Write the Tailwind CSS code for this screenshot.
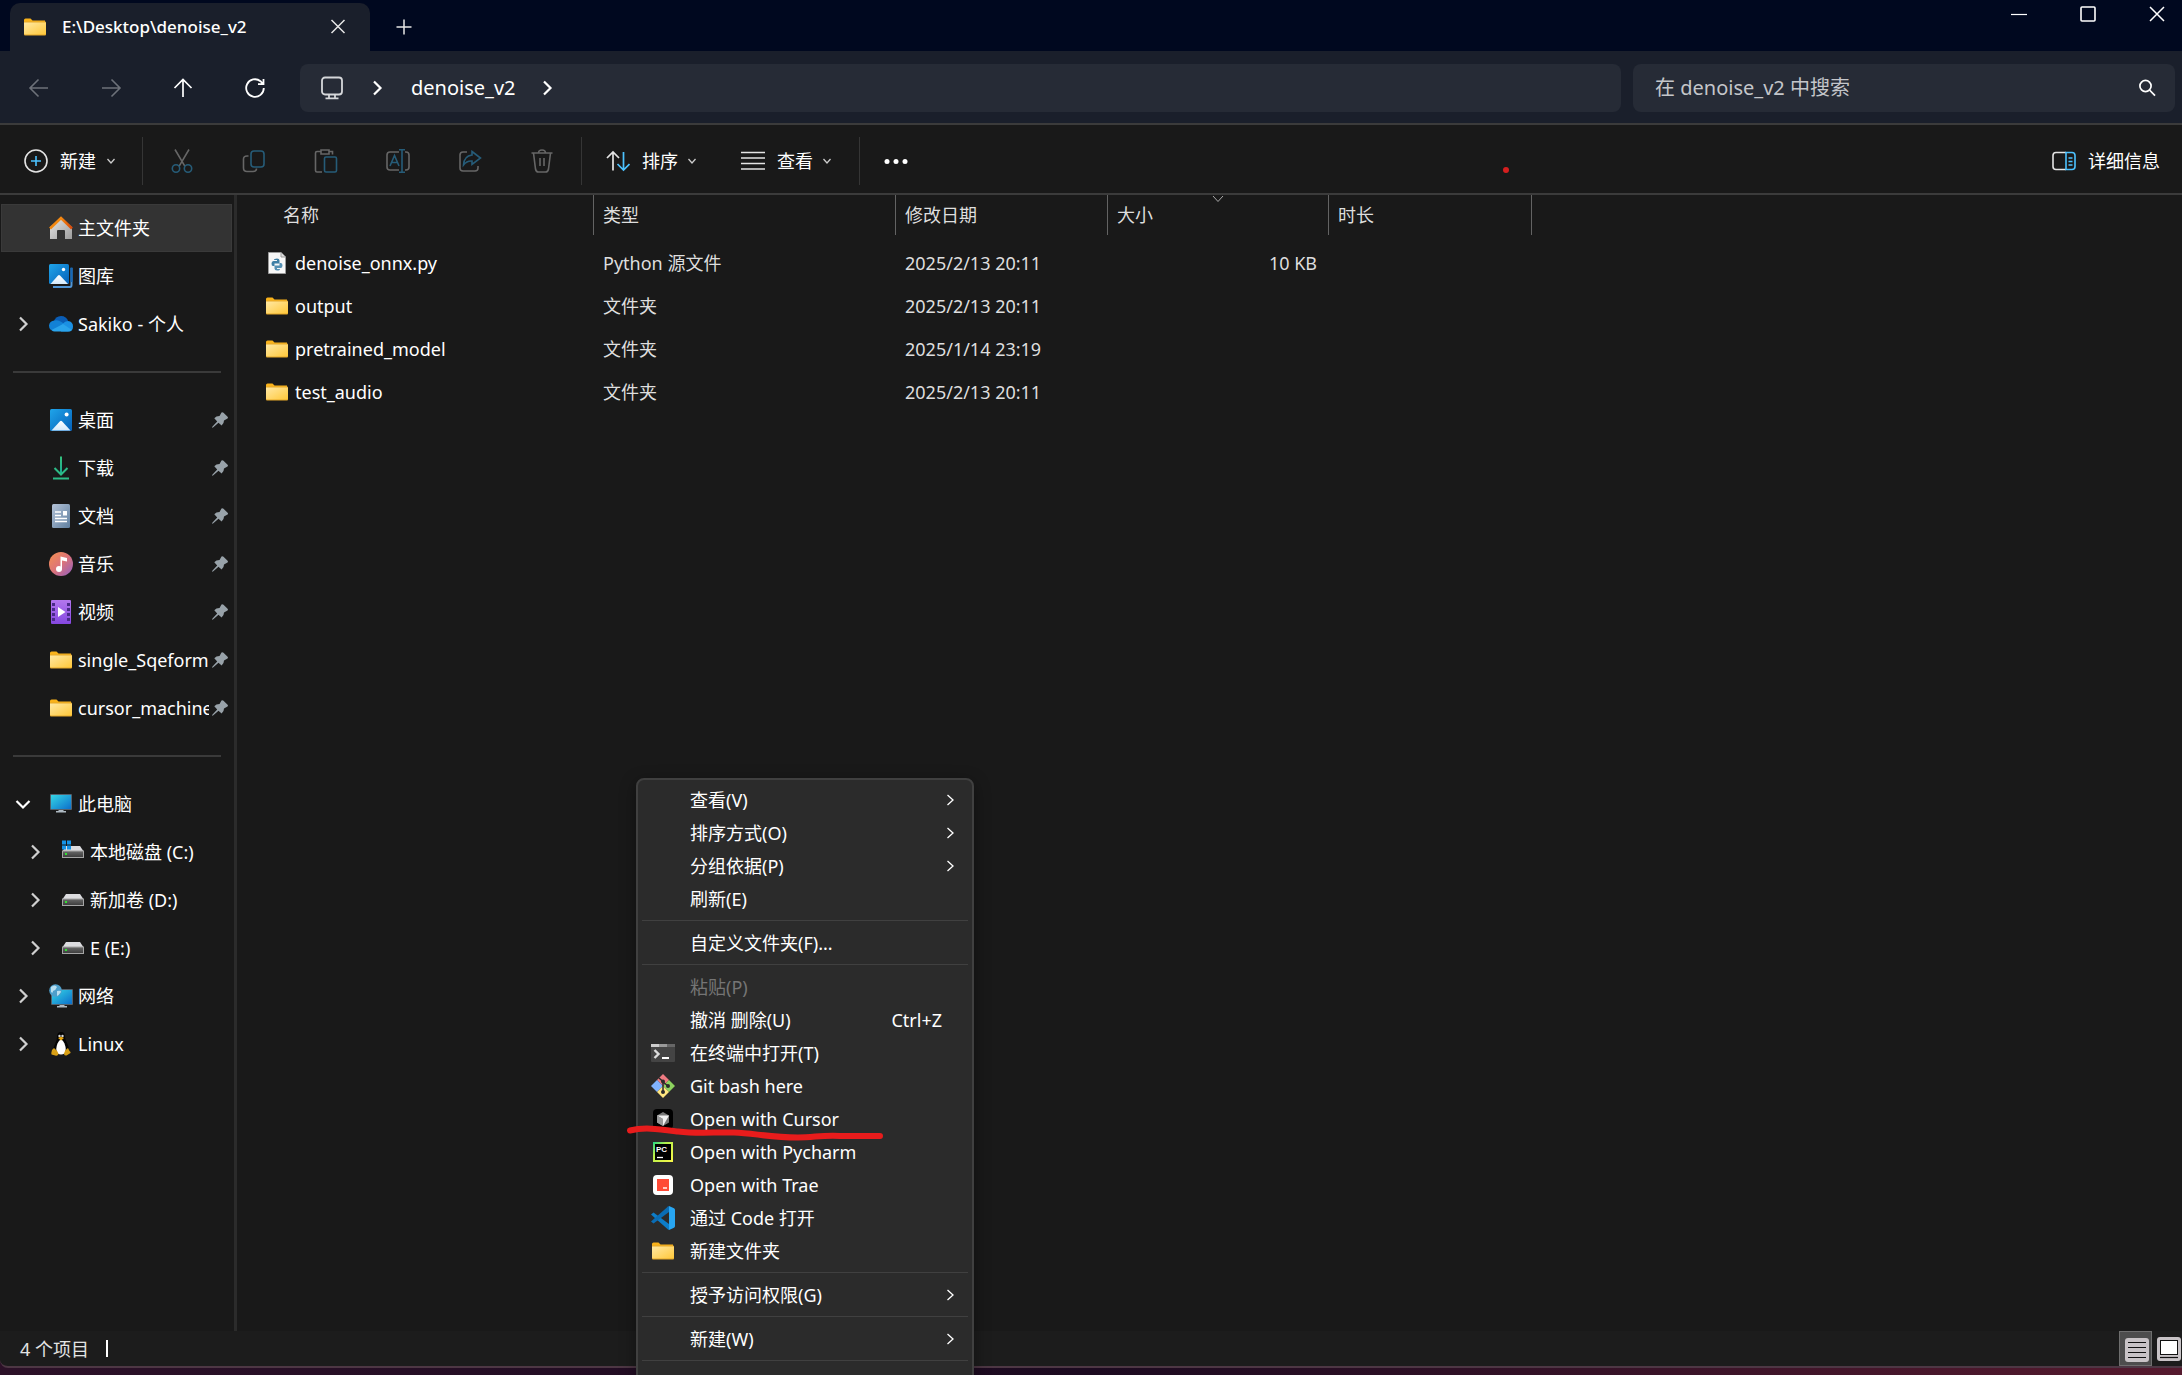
<!DOCTYPE html>
<html lang="zh-CN">
<head>
<meta charset="utf-8">
<meta name="viewport" content="width=device-width, initial-scale=1">
<title>E:\Desktop\denoise_v2</title>
<script src="https://cdn.jsdelivr.net/npm/@tailwindcss/browser@4"></script>
</head>
<body class="bg-[#191919]">
<svg class="absolute size-0" aria-hidden="true">
  <defs>
    <linearGradient id="gFolder" x1="0" y1="0" x2="1" y2="1"><stop offset="0" stop-color="#ffe8a3"/><stop offset="1" stop-color="#ffc83a"/></linearGradient>
    <linearGradient id="gBlue" x1="0" y1="0" x2="1" y2="1"><stop offset="0" stop-color="#1fa5ea"/><stop offset="1" stop-color="#0560b8"/></linearGradient>
    <linearGradient id="gScreen" x1="0" y1="0" x2="1" y2="1"><stop offset="0" stop-color="#35d6e6"/><stop offset="1" stop-color="#0c6fcb"/></linearGradient>
    <linearGradient id="gHouse" x1="0" y1="0" x2="1" y2="1"><stop offset="0" stop-color="#e6e6e6"/><stop offset="1" stop-color="#9d9d9d"/></linearGradient>
    <linearGradient id="gRoof" x1="0" y1="0" x2="1" y2="0"><stop offset="0" stop-color="#f0860f"/><stop offset=".5" stop-color="#f58a12"/><stop offset="1" stop-color="#d6470a"/></linearGradient>
    <linearGradient id="gSnow" x1="0" y1="0" x2="0" y2="1"><stop offset="0" stop-color="#fff"/><stop offset="1" stop-color="#d3e9fb"/></linearGradient>
    <linearGradient id="gDown" x1="0" y1="0" x2="0" y2="1"><stop offset="0" stop-color="#35c27d"/><stop offset="1" stop-color="#17a596"/></linearGradient>
    <linearGradient id="gDoc" x1="0" y1="0" x2="1" y2="1"><stop offset="0" stop-color="#b4c3d8"/><stop offset="1" stop-color="#5f7f9f"/></linearGradient>
    <linearGradient id="gMusic" x1="0" y1="0" x2="1" y2="1"><stop offset="0" stop-color="#f5914e"/><stop offset=".5" stop-color="#dc7379"/><stop offset="1" stop-color="#8f5fc4"/></linearGradient>
    <linearGradient id="gVideo" x1="0" y1="0" x2="0" y2="1"><stop offset="0" stop-color="#b377ee"/><stop offset="1" stop-color="#8547e0"/></linearGradient>
    <linearGradient id="gDisk" x1="0" y1="0" x2="0" y2="1"><stop offset="0" stop-color="#6a6a6a"/><stop offset="1" stop-color="#3a3a3a"/></linearGradient>
    <linearGradient id="gPc" x1="0" y1="0" x2="1" y2="1"><stop offset="0" stop-color="#21d789"/><stop offset=".35" stop-color="#b6f04a"/><stop offset="1" stop-color="#fcf84a"/></linearGradient>
    <symbol id="folder" viewBox="0 0 24 24"><path d="M1 5Q1 3.500 2.500 3.500H7.500L9.500 5.500H22V10H1Z" fill="#f9b21a"/><path d="M1 6.500H22Q23 6.500 23 7.500V19.500Q23 20.500 22 20.500H2Q1 20.500 1 19.500Z" fill="#e5a829"/><path d="M1 7.500H23V18.500Q23 19.500 22 19.500H2Q1 19.500 1 18.500Z" fill="url(#gFolder)"/></symbol>
    <symbol id="chev" viewBox="0 0 16 16"><path d="M5 1.500L11.500 8L5 14.500" fill="none" stroke="currentColor" stroke-width="2.200"/></symbol>
    <symbol id="chevthin" viewBox="0 0 12 12"><path d="M3.500 1L9 6L3.500 11" fill="none" stroke="currentColor" stroke-width="1.300"/></symbol>
    <symbol id="chevd" viewBox="0 0 10 10"><path d="M1.500 3L5 7L8.500 3" fill="none" stroke="currentColor" stroke-width="1.300"/></symbol>
    <symbol id="pin" viewBox="0 0 18 18"><path d="M10.500 1.500Q11.500.800 12.500 1.700L16.600 5.800Q17.500 6.800 16.500 7.600L13 9.500Q13 13 10.600 14.400L7.500 11.700L2 16.500L1 16.800L1.300 15.700L6.200 10.400L3.300 7.200Q5 5 8.500 5Z" fill="#98a2a9"/></symbol>
    <symbol id="picture" viewBox="0 0 24 24"><rect x="1" y="1" width="22" height="22" rx="1.500" fill="url(#gBlue)"/><path d="M2.500 22.500L11 13.200Q12 12.200 13 13.200L21.500 22.500Z" fill="url(#gSnow)"/><circle cx="17.600" cy="6.400" r="2" fill="#fff"/></symbol>
    <symbol id="disk" viewBox="0 0 24 24"><path d="M5 6H19L23 12H1Z" fill="#dcdcdf"/><rect x="1.500" y="11" width="21" height="6.500" fill="url(#gDisk)" stroke="#a5a5a5"/><rect x="4" y="13" width="2" height="2" fill="#31e231"/></symbol>
  </defs>
</svg>

<div class="relative flex h-screen flex-col overflow-hidden bg-[#191919] font-['Noto_Sans','Noto_Sans_CJK_SC',sans-serif] text-[18px] leading-6 text-white">

  <!-- Title bar with tabs -->
  <header class="flex h-[51px] shrink-0 justify-between bg-[#00081f]">
    <div class="flex items-end pl-[10px]">
      <div class="flex h-12 w-[360px] items-center rounded-t-[10px] bg-[#1a1f2b] pl-[13px] pr-[19px]">
        <svg class="size-6"><use href="#folder"/></svg>
        <span class="ml-[15px] text-[17px] font-medium">E:\Desktop\denoise_v2</span>
        <button aria-label="关闭标签页" class="ml-auto"><svg class="size-[26px]" viewBox="0 0 26 26"><path d="M6.500 6L19.500 19M19.500 6L6.500 19" stroke="#e6e6e6" stroke-width="1.500"/></svg></button>
      </div>
      <button aria-label="新建标签页" class="ml-[22px] pb-3"><svg class="size-6" viewBox="0 0 24 24"><path d="M12 4.500V19.500M4.500 12H19.500" stroke="#e6e6e6" stroke-width="1.500"/></svg></button>
    </div>
    <div class="flex h-[27px] items-center gap-[47px] pr-[14px]">
      <button aria-label="最小化"><svg class="size-[22px]" viewBox="0 0 22 22"><path d="M3 11.500H19" stroke="#fff" stroke-width="1.200"/></svg></button>
      <button aria-label="最大化"><svg class="size-[22px]" viewBox="0 0 22 22"><rect x="4" y="4" width="14" height="14" rx="1" fill="none" stroke="#fff" stroke-width="1.600"/></svg></button>
      <button aria-label="关闭"><svg class="size-[22px]" viewBox="0 0 22 22"><path d="M4 4L18 18M18 4L4 18" stroke="#fff" stroke-width="1.500"/></svg></button>
    </div>
  </header>

  <!-- Navigation bar -->
  <nav class="flex h-[74px] shrink-0 items-center border-b-2 border-[#3b3b3b] bg-[#1a1f2b] pr-[7px] pt-[2px]">
    <div class="flex w-[300px] shrink-0 items-center gap-12 pl-[27px]">
      <button aria-label="后退"><svg class="size-6" viewBox="0 0 24 24" fill="none" stroke="#6d7179" stroke-width="1.600"><path d="M21 12H3.500M11.500 3.500L3 12L11.500 20.500"/></svg></button>
      <button aria-label="前进"><svg class="size-6" viewBox="0 0 24 24" fill="none" stroke="#6d7179" stroke-width="1.600"><path d="M3 12H20.500M12.500 3.500L21 12L12.500 20.500"/></svg></button>
      <button aria-label="上移"><svg class="size-6" viewBox="0 0 24 24" fill="none" stroke="#fff" stroke-width="1.700"><path d="M12 21V3.500M3.500 12L12 3.500L20.500 12"/></svg></button>
      <button aria-label="刷新"><svg class="size-6" viewBox="0 0 24 24" fill="none" stroke="#fff" stroke-width="1.800"><path d="M20.800 12A8.800 8.800 0 1 1 17.500 5.200L20 7.800M20.500 3V8.200H15"/></svg></button>
    </div>
    <div class="flex h-12 grow items-center rounded-lg bg-[#262b36] pl-5">
      <svg class="size-6" viewBox="0 0 24 24" fill="none" stroke="#d5d7da" stroke-width="1.800"><rect x="2" y="1.500" width="20" height="17" rx="3"/><path d="M9 18.500V22M15 18.500V22M5.500 22.300H18.500"/></svg>
      <svg class="ml-[25px] size-4 text-white"><use href="#chev"/></svg>
      <a href="#" class="ml-[26px] text-[20px]">denoise_v2</a>
      <svg class="ml-[23px] size-4 text-white"><use href="#chev"/></svg>
    </div>
    <div class="ml-3 flex h-12 w-[542px] shrink-0 items-center rounded-lg bg-[#262b36] pl-[22px] pr-[18px]">
      <input aria-label="搜索" placeholder="在 denoise_v2 中搜索" class="min-w-0 grow bg-transparent text-[20px] outline-none placeholder:text-[#c4c6ca]">
      <button aria-label="搜索"><svg class="size-5" viewBox="0 0 20 20" fill="none" stroke="#fff" stroke-width="1.700"><circle cx="8.500" cy="8" r="5.600"/><path d="M12.500 12L18 17.700"/></svg></button>
    </div>
  </nav>

  <!-- Command bar -->
  <div class="flex h-[70px] shrink-0 items-center border-b-2 border-[#3b3b3b] pr-[22px] pt-[3px]">
    <button class="flex w-[142px] items-center pl-6">
      <svg class="size-6" viewBox="0 0 24 24" fill="none" stroke-width="1.600"><circle cx="12" cy="12" r="11" stroke="#e4e4e4"/><path d="M12 7V17M7 12H17" stroke="#4cc2ff"/></svg>
      <span class="ml-3">新建</span><svg class="ml-[10px] size-[10px] text-[#ccc]"><use href="#chevd"/></svg>
    </button>
    <div class="h-12 w-px bg-[#353535]"></div>
    <div class="flex items-center gap-12 px-[27px]">
      <button aria-label="剪切" disabled><svg class="size-6" viewBox="0 0 24 24" fill="none" stroke-width="1.600"><path d="M5 0.500L14.800 17.200M19 .500L9.200 17.200" stroke="#666"/><g stroke="#265c78"><circle cx="6" cy="19.500" r="3.700"/><circle cx="18" cy="19.500" r="3.700"/></g></svg></button>
      <button aria-label="复制" disabled><svg class="size-6" viewBox="0 0 24 24" fill="none" stroke-width="1.600"><path d="M6.500 7H5Q1.500 7 1.500 10V19Q1.500 22.500 5 22.500H11Q14.500 22.500 14.500 19.500" stroke="#666"/><rect x="9" y="2" width="13" height="16" rx="3" stroke="#265c78"/></svg></button>
      <button aria-label="粘贴" disabled><svg class="size-6" viewBox="0 0 24 24" fill="none" stroke-width="1.600"><path d="M7 2.500H3Q1.500 2.500 1.500 4V21.500Q1.500 23 3 23H8M15 2.500H18.500V5.500M7 1H15V5H7Z" stroke="#666"/><rect x="10.500" y="8" width="12" height="15" rx="1.500" stroke="#265c78"/></svg></button>
      <button aria-label="重命名" disabled><svg class="size-6" viewBox="0 0 24 24" fill="none" stroke-width="1.600"><path d="M13 3H4Q1 3 1 6V18Q1 21 4 21H13M19 3H20Q23 3 23 6V18Q23 21 20 21H19" stroke="#666"/><path d="M4 17L8.500 6.500L13 17M5.500 13.500H11.500M16 .800V23.200M13 .800H19M13 23.200H19" stroke="#265c78"/></svg></button>
      <button aria-label="共享" disabled><svg class="size-6" viewBox="0 0 24 24" fill="none" stroke-width="1.600"><path d="M9 3H5Q2 3 2 6V19Q2 22 5 22H17Q20 22 20 19V17" stroke="#666"/><path d="M14 2.500L22.500 9L14 15.500V12Q9 11.500 5.500 16Q6 7 14 6Z" stroke="#265c78"/></svg></button>
      <button aria-label="删除" disabled><svg class="size-6" viewBox="0 0 24 24" fill="none" stroke="#666" stroke-width="1.600"><path d="M1.500 4H22.500M8.500 4Q8.500 1 12 1Q15.500 1 15.500 4M3.500 4L5.500 20Q6 23 8.500 23H15.500Q18 23 18.500 20L20.500 4M10 9V17M14 9V17"/></svg></button>
    </div>
    <div class="h-12 w-px bg-[#353535]"></div>
    <div class="flex items-center gap-[44px] pl-6 pr-[27px]">
      <button class="flex items-center"><svg class="size-6" viewBox="0 0 24 24" fill="none" stroke-width="1.700"><path d="M7 21.500V3M1 9L7 3L13 9" stroke="#e4e4e4"/><path d="M17.500 3V21M11.500 15L17.500 21L23.500 15" stroke="#4cc2ff"/></svg><span class="ml-3">排序</span><svg class="ml-[9px] size-[10px] text-[#ccc]"><use href="#chevd"/></svg></button>
      <button class="flex items-center"><svg class="size-6" viewBox="0 0 24 24" stroke="#e4e4e4" stroke-width="1.500"><path d="M0 3.500H24M0 9H24M0 14.500H24M0 20H24"/></svg><span class="ml-3">查看</span><svg class="ml-[9px] size-[10px] text-[#ccc]"><use href="#chevd"/></svg></button>
    </div>
    <div class="h-12 w-px bg-[#353535]"></div>
    <button aria-label="查看更多" class="ml-6"><svg class="size-6" viewBox="0 0 24 24" fill="#fff"><circle cx="3" cy="12.500" r="2.500"/><circle cx="12" cy="12.500" r="2.500"/><circle cx="21" cy="12.500" r="2.500"/></svg></button>
    <button class="ml-auto flex items-center"><svg class="size-6" viewBox="0 0 24 24" fill="none" stroke-width="1.600"><path d="M14 3.500H4Q1 3.500 1 6.500V17.500Q1 20.500 4 20.500H14" stroke="#e4e4e4"/><path d="M14 3.500H20Q23 3.500 23 6.500V17.500Q23 20.500 20 20.500H14ZM16.500 9H20.500M16.500 12.500H20.500M16.500 16H20.500" stroke="#4cc2ff"/></svg><span class="ml-3">详细信息</span></button>
  </div>

  <div class="flex min-h-0 grow">
    <!-- Navigation pane -->
    <aside class="w-[237px] shrink-0 overflow-hidden border-r-[3px] border-[#2b2b2b] pt-[9px]">
      <ul>
        <li class="ml-px mr-[2px] flex h-12 items-center border border-[#3a3a3a] bg-[#333] pl-[47px]">
          <svg class="size-6 shrink-0" viewBox="0 0 24 24"><path d="M1 11L12 2L23 11V23H16V15Q16 14 15 14H9Q8 14 8 15V23H1Z" fill="url(#gHouse)"/><path d="M1 12.500L12 2L23 12.500" fill="none" stroke="url(#gRoof)" stroke-width="2.600"/></svg>
          <a href="#" class="ml-[5px]">主文件夹</a></li>
        <li class="flex h-12 items-center pl-[49px]">
          <svg class="size-6 shrink-0" viewBox="0 0 24 24"><path d="M22.500 4V21Q22.500 23 21 23H4" fill="none" stroke="#4f95d6" stroke-width="2"/><path d="M22.500 3.500V18" stroke="#1468b8" stroke-width="2"/><rect width="20" height="20" rx="1.500" fill="url(#gBlue)"/><path d="M1.500 20L9 11.500Q10 10.500 11 11.500L19 20Z" fill="url(#gSnow)"/><circle cx="14.500" cy="5.500" r="1.700" fill="#fff"/></svg>
          <a href="#" class="ml-[5px]">图库</a></li>
        <li class="flex h-12 items-center pl-[15px]">
          <svg class="size-4 shrink-0 text-[#d0d0d0]"><use href="#chev"/></svg>
          <svg class="ml-[18px] size-6 shrink-0" viewBox="0 0 24 24"><path d="M4.500 10Q6.500 4 12 4Q17.500 4 19.300 9.500L12 14Z" fill="#0a5db5"/><path d="M5.500 8.500Q9 7.500 12.500 10L17 13L8 19H5.500Q0 18.500 0 13.500Q.500 9 5.500 8.500Z" fill="#1281d6"/><path d="M13.500 12Q16 9 19 9Q24 9.500 24 14.500Q24 19.500 19 19.500H12Z" fill="#1b90e3"/><path d="M2.500 18L14 12L23 18Q21.500 19.500 19 19.500H5.500Q4 19.500 2.500 18Z" fill="#2aa4ec"/></svg>
          <a href="#" class="ml-[5px]">Sakiko - 个人</a></li>
        <li class="flex h-12 items-center pl-[13px] pr-[13px]"><hr class="grow border-t-2 border-[#3a3a3a]"></li>
        <li class="flex h-12 items-center pl-[49px] pr-[5px]"><svg class="size-6 shrink-0"><use href="#picture"/></svg><a href="#" class="ml-[5px] w-[131px]">桌面</a><svg class="ml-[2px] size-[18px] shrink-0"><use href="#pin"/></svg></li>
        <li class="flex h-12 items-center pl-[49px] pr-[5px]"><svg class="size-6 shrink-0" viewBox="0 0 24 24" fill="none" stroke="#2cbb86" stroke-width="2"><path d="M11 .500H13V19H11Z" fill="url(#gDown)" stroke="none"/><path d="M5.500 12L12 18.500L18.500 12M4 22.500H20"/></svg><a href="#" class="ml-[5px] w-[131px]">下载</a><svg class="ml-[2px] size-[18px] shrink-0"><use href="#pin"/></svg></li>
        <li class="flex h-12 items-center pl-[49px] pr-[5px]"><svg class="size-6 shrink-0" viewBox="0 0 24 24"><rect x="3" width="18" height="24" rx="1.500" fill="url(#gDoc)"/><path d="M6 8H12M6 11.500H12M6 14.500H18M6 17.500H18" stroke="#fff" stroke-width="1.300"/><rect x="14" y="7" width="4" height="4.500" fill="#fff"/></svg><a href="#" class="ml-[5px] w-[131px]">文档</a><svg class="ml-[2px] size-[18px] shrink-0"><use href="#pin"/></svg></li>
        <li class="flex h-12 items-center pl-[49px] pr-[5px]"><svg class="size-6 shrink-0" viewBox="0 0 24 24"><circle cx="12" cy="12" r="12" fill="url(#gMusic)"/><circle cx="10" cy="17" r="3" fill="#fff"/><path d="M11.500 17V4.500L18 6V9.500L13 8.500V17Z" fill="#fff"/></svg><a href="#" class="ml-[5px] w-[131px]">音乐</a><svg class="ml-[2px] size-[18px] shrink-0"><use href="#pin"/></svg></li>
        <li class="flex h-12 items-center pl-[49px] pr-[5px]"><svg class="size-6 shrink-0" viewBox="0 0 24 24"><rect x="2" width="20" height="24" rx="1" fill="url(#gVideo)"/><path d="M4.500 3V22M19.500 3V22" stroke="#4a2a88" stroke-width="3" stroke-dasharray="3 2"/><path d="M9 7L16.500 12L9 17Z" fill="#fff"/></svg><a href="#" class="ml-[5px] w-[131px]">视频</a><svg class="ml-[2px] size-[18px] shrink-0"><use href="#pin"/></svg></li>
        <li class="flex h-12 items-center pl-[49px] pr-[5px]"><svg class="size-6 shrink-0"><use href="#folder"/></svg><a href="#" class="ml-[5px] w-[131px] overflow-hidden whitespace-nowrap">single_Sqeform</a><svg class="ml-[2px] size-[18px] shrink-0"><use href="#pin"/></svg></li>
        <li class="flex h-12 items-center pl-[49px] pr-[5px]"><svg class="size-6 shrink-0"><use href="#folder"/></svg><a href="#" class="ml-[5px] w-[131px] overflow-hidden whitespace-nowrap">cursor_machine</a><svg class="ml-[2px] size-[18px] shrink-0"><use href="#pin"/></svg></li>
        <li class="flex h-12 items-center pl-[13px] pr-[13px]"><hr class="grow border-t-2 border-[#3a3a3a]"></li>
        <li class="flex h-12 items-center pl-[15px]"><svg class="size-4 shrink-0 rotate-90 text-white"><use href="#chev"/></svg>
          <svg class="ml-[18px] size-6 shrink-0" viewBox="0 0 24 24"><rect x="1" y="2" width="22" height="16" rx="1" fill="#53616d"/><rect x="2" y="3" width="20" height="14" fill="url(#gScreen)"/><path d="M9.500 18H14.500V19H17V20.500H7V19H9.500Z" fill="#aeb9c2"/></svg>
          <a href="#" class="ml-[5px]">此电脑</a></li>
        <li class="flex h-12 items-center pl-[27px]"><svg class="size-4 shrink-0 text-[#d0d0d0]"><use href="#chev"/></svg>
          <svg class="ml-[18px] size-6 shrink-0" viewBox="0 0 24 24"><use href="#disk"/><path d="M1 .500H5V4.500H1ZM6 .500H10V4.500H6ZM1 5.500H5V9.500H1ZM6 5.500H10V9.500H6Z" fill="#1593e6"/></svg>
          <a href="#" class="ml-[5px]">本地磁盘 (C:)</a></li>
        <li class="flex h-12 items-center pl-[27px]"><svg class="size-4 shrink-0 text-[#d0d0d0]"><use href="#chev"/></svg><svg class="ml-[18px] size-6 shrink-0"><use href="#disk"/></svg><a href="#" class="ml-[5px]">新加卷 (D:)</a></li>
        <li class="flex h-12 items-center pl-[27px]"><svg class="size-4 shrink-0 text-[#d0d0d0]"><use href="#chev"/></svg><svg class="ml-[18px] size-6 shrink-0"><use href="#disk"/></svg><a href="#" class="ml-[5px]">E (E:)</a></li>
        <li class="flex h-12 items-center pl-[15px]"><svg class="size-4 shrink-0 text-[#d0d0d0]"><use href="#chev"/></svg>
          <svg class="ml-[18px] size-6 shrink-0" viewBox="0 0 24 24"><rect x="2" y="5" width="22" height="16" rx="1" fill="#53616d"/><rect x="3" y="6" width="20" height="14" fill="url(#gScreen)"/><path d="M10.500 21H15.500V22H18V23.500H8V22H10.500Z" fill="#aeb9c2"/><circle cx="6.500" cy="6.500" r="6.300" fill="#4e9fcb"/><path d="M2 3Q6 0 8 3Q7 6 4 7Q4 10 2 8ZM8 7Q12 6 12 8Q10 11 8 12Z" fill="#b9dff0"/></svg>
          <a href="#" class="ml-[5px]">网络</a></li>
        <li class="flex h-12 items-center pl-[15px]"><svg class="size-4 shrink-0 text-[#d0d0d0]"><use href="#chev"/></svg>
          <svg class="ml-[18px] size-6 shrink-0" viewBox="0 0 24 24"><path d="M12 0Q16 0 16 5Q16 8 18.500 12Q21 17 19 21H5Q3.500 17 6 12Q8.300 8 8 5Q8 0 12 0Z" fill="#050505"/><path d="M12 7.500Q14 8 15.500 11.500Q18 18 15.500 21.500Q12 23.500 8.500 21.500Q6 17.500 8.500 11.500Q10 8 12 7.500Z" fill="#fff"/><circle cx="10.500" cy="4" r="1.200" fill="#ddd"/><circle cx="13.500" cy="4" r="1.200" fill="#ddd"/><path d="M9 6L12 4.800L15 6L12 8.500Z" fill="#e9a70f"/><path d="M5 16Q8 18 9.500 22Q9 24 7 23.800L2.500 22.500Q2 21 3 18ZM19 16Q15.500 18 15 22Q15.500 24 17.500 23.500L21.500 21Q22 20 20.500 19Z" fill="#d9a015"/></svg>
          <a href="#" class="ml-[5px]">Linux</a></li>
      </ul>
    </aside>

    <!-- File list -->
    <main class="relative min-w-0 grow">
      <table class="w-[1295px] table-fixed border-collapse text-left">
        <colgroup><col class="w-[357px]"><col class="w-[302px]"><col class="w-[212px]"><col class="w-[221px]"><col class="w-[203px]"></colgroup>
        <thead class="text-[#dedede]">
          <tr class="h-[46px] align-top">
            <th class="p-0 font-normal"><div class="h-10 border-r border-[#636363] pl-[46px] pt-2">名称</div></th>
            <th class="p-0 font-normal"><div class="h-10 border-r border-[#636363] pl-[9px] pt-2">类型</div></th>
            <th class="p-0 font-normal"><div class="h-10 border-r border-[#636363] pl-[9px] pt-2">修改日期</div></th>
            <th class="p-0 font-normal"><div class="relative h-10 border-r border-[#636363] pl-[9px] pt-2">大小<svg class="absolute inset-x-0 top-0 mx-auto h-2 w-3 text-[#aaa]" viewBox="0 0 12 8"><path d="M1 1L6 6.500L11 1" fill="none" stroke="currentColor"/></svg></div></th>
            <th class="p-0 font-normal"><div class="h-10 border-r border-[#636363] pl-[9px] pt-2">时长</div></th>
          </tr>
        </thead>
        <tbody class="text-[#dedede]">
          <tr class="h-[43px]"><td class="p-0"><div class="flex items-center pl-7 text-white"><svg class="size-6" viewBox="0 0 24 24"><path d="M3.500 1.500H16L20.500 6V22.500H3.500Z" fill="#f7f7f7" stroke="#9b9b9b"/><path d="M16 1.500V6H20.500" fill="#ddd" stroke="#9b9b9b"/><path d="M9 9Q9 7.500 12 7.500Q14.500 7.500 14.500 9.500V12.500H9.500V15H8Q6.500 15 6.500 12.500Q6.500 10 8.500 10H12V9Z" fill="#3f7fa5"/><path d="M15 18Q15 19.500 12 19.500Q9.500 19.500 9.500 17.500V14.500H14.500V12H16Q17.500 12 17.500 14.500Q17.500 17 15.500 17H12V18Z" fill="#5590b3"/></svg><span class="ml-[6px]">denoise_onnx.py</span></div></td><td class="py-0 pl-[9px] pr-0">Python 源文件</td><td class="py-0 pl-[9px] pr-0">2025/2/13 20:11</td><td class="py-0 pl-0 pr-3 text-right">10 KB</td><td></td></tr>
          <tr class="h-[43px]"><td class="p-0"><div class="flex items-center pl-7 text-white"><svg class="size-6"><use href="#folder"/></svg><span class="ml-[6px]">output</span></div></td><td class="py-0 pl-[9px] pr-0">文件夹</td><td class="py-0 pl-[9px] pr-0">2025/2/13 20:11</td><td></td><td></td></tr>
          <tr class="h-[43px]"><td class="p-0"><div class="flex items-center pl-7 text-white"><svg class="size-6"><use href="#folder"/></svg><span class="ml-[6px]">pretrained_model</span></div></td><td class="py-0 pl-[9px] pr-0">文件夹</td><td class="py-0 pl-[9px] pr-0">2025/1/14 23:19</td><td></td><td></td></tr>
          <tr class="h-[43px]"><td class="p-0"><div class="flex items-center pl-7 text-white"><svg class="size-6"><use href="#folder"/></svg><span class="ml-[6px]">test_audio</span></div></td><td class="py-0 pl-[9px] pr-0">文件夹</td><td class="py-0 pl-[9px] pr-0">2025/2/13 20:11</td><td></td><td></td></tr>
        </tbody>
      </table>
    </main>
  </div>

  <!-- Status bar -->
  <footer class="shrink-0 bg-linear-to-r from-[#2c1128] via-[#1c0a20] to-[#561a2e] pb-[7px]">
    <div class="flex h-[37px] items-center rounded-bl-lg border-b-2 border-[#4d3744] bg-[#1c1c1c] pl-5">
      <span class="text-[#e4e4e4]">4 个项目</span><span class="ml-[17px] h-[17px] w-[2px] bg-white"></span>
      <button aria-label="详细信息视图" class="ml-auto flex h-[35px] w-[33px] items-center justify-center border border-[#6e6e6e] bg-[#4d4d4d] pl-[3px] pt-[3px]"><svg class="size-6" viewBox="0 0 24 24"><rect width="24" height="24" rx="3" fill="#c8c3c6"/><path d="M3 4.500H21M3 9.500H21M3 14.500H21M3 19.500H21" stroke="#111" stroke-width="1.200"/></svg></button>
      <button aria-label="大图标视图" class="ml-[5px] mr-px"><svg class="size-6" viewBox="0 0 24 24"><rect width="24" height="24" rx="3" fill="#c8c3c6"/><rect x="3.500" y="3.500" width="17" height="14" fill="#fff" stroke="#111"/><path d="M3 20.500H21" stroke="#111" stroke-width="1.200"/></svg></button>
    </div>
  </footer>

  <!-- Context menu -->
  <div role="menu" class="absolute left-[636px] top-[778px] flex w-[338px] flex-col rounded-lg border-2 border-[#404040] bg-[#2b2b2b] px-1 pb-10 pt-[3px] shadow-[0_4px_16px_rgba(0,0,0,0.4)]">
    <button role="menuitem" class="flex h-[33px] items-center pl-12 pr-[12px]"><span>查看(V)</span><svg class="ml-auto size-3"><use href="#chevthin"/></svg></button>
    <button role="menuitem" class="flex h-[33px] items-center pl-12 pr-[12px]"><span>排序方式(O)</span><svg class="ml-auto size-3"><use href="#chevthin"/></svg></button>
    <button role="menuitem" class="flex h-[33px] items-center pl-12 pr-[12px]"><span>分组依据(P)</span><svg class="ml-auto size-3"><use href="#chevthin"/></svg></button>
    <button role="menuitem" class="flex h-[33px] items-center pl-12">刷新(E)</button>
    <hr class="my-[5px] border-[#404040]">
    <button role="menuitem" class="flex h-[33px] items-center pl-12">自定义文件夹(F)...</button>
    <hr class="my-[5px] border-[#404040]">
    <button role="menuitem" disabled class="flex h-[33px] items-center pl-12 text-[#757575]">粘贴(P)</button>
    <button role="menuitem" class="flex h-[33px] items-center justify-between pl-12 pr-[26px]"><span>撤消 删除(U)</span><span>Ctrl+Z</span></button>
    <button role="menuitem" class="flex h-[33px] items-center gap-[15px] pl-[9px]"><svg class="size-6" viewBox="0 0 24 24"><rect y="3" width="24" height="18" rx="1" fill="#444"/><path d="M0 3H8V6H0Z" fill="#ccc"/><path d="M8 3H16V6H8Z" fill="#999"/><path d="M16 3H24V6H16Z" fill="#666"/><path d="M3.500 9L7.500 13L3.500 17" fill="none" stroke="#ddd" stroke-width="2.400"/><path d="M11 17H18" stroke="#fff" stroke-width="2"/></svg>在终端中打开(T)</button>
    <button role="menuitem" class="flex h-[33px] items-center gap-[15px] pl-[9px]"><svg class="size-6" viewBox="0 0 24 24"><path d="M12 0L18 6L12 12L6 6Z" fill="#ef7b82"/><path d="M6 6L12 12L6 18L0 12Z" fill="#80b3ff"/><path d="M18 6L24 12L18 18L12 12Z" fill="#8dd35f"/><path d="M12 12L18 18L12 24L6 18Z" fill="#ffe680"/><path d="M8 4L12 7.500V18M12 8L17 12" fill="none" stroke="#2b2b2b" stroke-width="1.500"/><circle cx="12" cy="7.500" r="2" fill="#2b2b2b"/><circle cx="17" cy="12" r="2" fill="#2b2b2b"/><circle cx="12" cy="18" r="2" fill="#2b2b2b"/></svg>Git bash here</button>
    <button role="menuitem" class="flex h-[33px] items-center gap-[15px] pl-[9px]"><svg class="size-6" viewBox="0 0 24 24"><rect x="2" y="2" width="20" height="20" rx="4" fill="#000"/><path d="M12 5L18 8.500V15.500L12 19L6 15.500V8.500Z" fill="#777"/><path d="M6 8.500H18L12 19V12Z" fill="#f2f2f2"/><path d="M6 8.500L12 12V19L6 15.500Z" fill="#9a9a9a"/></svg>Open with Cursor</button>
    <button role="menuitem" class="flex h-[33px] items-center gap-[15px] pl-[9px]"><svg class="size-6" viewBox="0 0 24 24"><rect x="2" y="2" width="20" height="20" fill="url(#gPc)"/><rect x="4" y="4" width="16" height="16" fill="#000"/><text x="5" y="12" font-family="Liberation Sans" font-size="8" font-weight="bold" fill="#fff">PC</text><path d="M6 17.500H12" stroke="#fff" stroke-width="1.300"/></svg>Open with Pycharm</button>
    <button role="menuitem" class="flex h-[33px] items-center gap-[15px] pl-[9px]"><svg class="size-6" viewBox="0 0 24 24"><rect x="2" y="2" width="20" height="20" rx="4" fill="#fff"/><rect x="6" y="6" width="12" height="12" fill="#ff4a36"/><path d="M12 15H16" stroke="#ffc9c2" stroke-width="2"/></svg>Open with Trae</button>
    <button role="menuitem" class="flex h-[33px] items-center gap-[15px] pl-[9px]"><svg class="size-6" viewBox="0 0 24 24"><path d="M0 8.500L2.500 6.500L18 18V24L17 23.500Z" fill="#0d7dc8"/><path d="M0 15.500L2.500 17.500L18 6V0L17 .500Z" fill="#0a6db5"/><path d="M18 0L23 2.200Q24 2.700 24 4V20Q24 21.300 23 21.800L18 24Z" fill="#28a6f2"/></svg>通过 Code 打开</button>
    <button role="menuitem" class="flex h-[33px] items-center gap-[15px] pl-[9px]"><svg class="size-6"><use href="#folder"/></svg>新建文件夹</button>
    <hr class="my-[5px] border-[#404040]">
    <button role="menuitem" class="flex h-[33px] items-center pl-12 pr-[12px]"><span>授予访问权限(G)</span><svg class="ml-auto size-3"><use href="#chevthin"/></svg></button>
    <hr class="my-[5px] border-[#404040]">
    <button role="menuitem" class="flex h-[33px] items-center pl-12 pr-[12px]"><span>新建(W)</span><svg class="ml-auto size-3"><use href="#chevthin"/></svg></button>
    <hr class="my-[5px] border-[#404040]">
  </div>

  <!-- Hand-drawn red marks -->
  <svg class="pointer-events-none absolute left-[626px] top-[1120px] h-6 w-[260px]" viewBox="0 0 260 24"><path d="M4 10.500C18 7 32 9 52 11.500C72 14 88 12 108 12.500C128 13 142 17.500 172 17.500C188 17.500 196 15 214 16H254" fill="none" stroke="#e81c1c" stroke-width="6" stroke-linecap="round"/></svg>
  <span class="absolute left-[1503px] top-[167px] size-[6px] rounded-full bg-[#d51f1f]"></span>
</div>
</body>
</html>
